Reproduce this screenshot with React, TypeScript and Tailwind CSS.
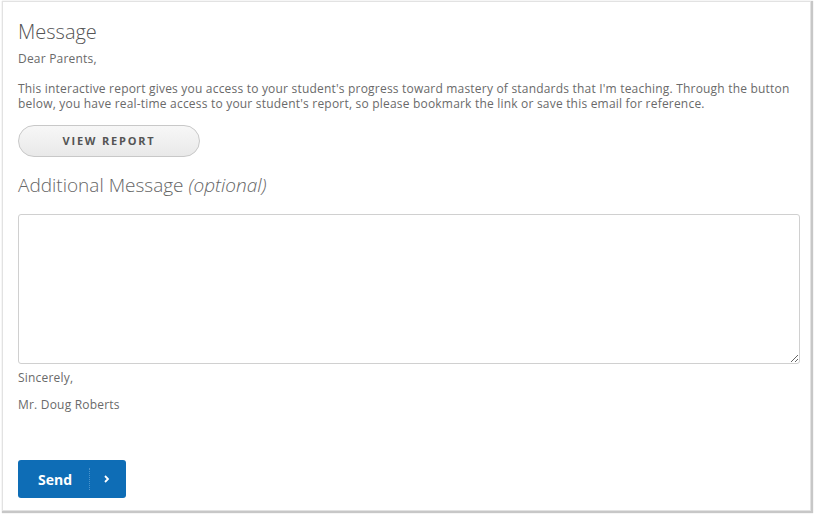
import React from "react";

export default function App() {
  return (
    <div className="w-[814px] h-[514px] bg-white pl-[2px] pt-[1px]" style={{ fontFamily: '"Open Sans", sans-serif' }}>
      <div className="w-[809px] h-[510px] bg-white border border-[#e2e2e2] shadow-[1px_1px_1px_1px_rgba(0,0,0,0.22)] pl-[15px] pr-[10px] pt-[16px] flex flex-col">
        <h1 className="text-[20px] font-light text-[#555] leading-[28px]">Message</h1>
        <p className="text-[12px] tracking-[0.2px] text-[#6a6a6a] leading-[15px] mt-[5px]">Dear Parents,</p>
        <p className="text-[12px] tracking-[0.2px] text-[#6a6a6a] leading-[15px] mt-[15px] w-[784px]">
          This interactive report gives you access to your student's progress toward mastery of standards that I'm teaching. Through the button below, you have real-time access to your student's report, so please bookmark the link or save this email for reference.
        </p>
        <button className="mt-[14px] w-[182px] h-[32px] rounded-full border border-[#c8c8c8] bg-gradient-to-b from-[#f7f7f7] to-[#e9e9e9] text-[11px] font-bold tracking-[1.8px] text-[#555] flex items-center justify-center">
          VIEW REPORT
        </button>
        <h2 className="mt-[15px] text-[19px] font-light text-[#666] leading-[26px]">
          Additional Message <span className="italic">(optional)</span>
        </h2>
        <textarea className="mt-[16px] w-[782px] h-[150px] border border-[#d0d0d0] rounded-[3px] resize-y outline-none block" />
        <p className="text-[12px] tracking-[0.2px] text-[#6a6a6a] leading-[15px] mt-[6px]">Sincerely,</p>
        <p className="text-[12px] tracking-[0.2px] text-[#6a6a6a] leading-[15px] mt-[12px]">Mr. Doug Roberts</p>
        <button className="mt-[48px] w-[108px] h-[38px] rounded-[3px] bg-[#0e6db6] text-white flex items-center">
          <span className="text-[14px] font-bold pl-[20px] w-[71px] text-left">Send</span>
          <span className="h-[22px] border-l border-dotted border-[#4b94cc]" />
          <svg className="ml-[13px]" width="8" height="10" viewBox="0 0 8 10">
            <path d="M2 2 L5 5 L2 8" stroke="white" strokeWidth="1.8" fill="none" />
          </svg>
        </button>
      </div>
    </div>
  );
}
